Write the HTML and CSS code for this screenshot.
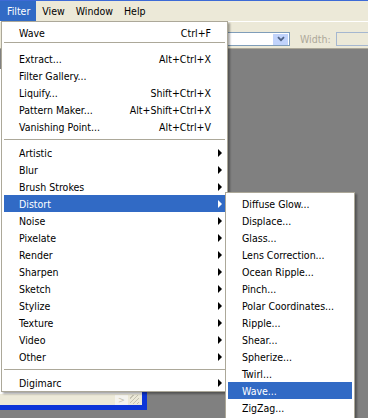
FILE: index.html
```html
<!DOCTYPE html>
<html>
	<head>
		<meta charset="utf-8" />
		<title>Filter Menu</title>
		<link rel="stylesheet" href="styles.css">
	</head>
	<body>
		<div class="menubar">
			<span class="menubar-item active">Filter</span>
			<span class="menubar-item">View</span>
			<span class="menubar-item">Window</span>
			<span class="menubar-item">Help</span>
		</div>

		<div class="options">
			<div class="combo">
				<span class="combo-btn">
					<svg width="8" height="6" viewBox="0 0 8 6"><path d="M1 1.2 L4 4.2 L7 1.2" fill="none" stroke="#4d6185" stroke-width="1.8"/></svg>
				</span>
			</div>
			<span class="options-label">Width:</span>
			<div class="field"></div>
		</div>

		<div class="workspace">
			<div class="doc-window">
				<div class="doc-status">
					<span class="doc-scroll">&gt;</span>
					<span class="doc-grip"></span>
				</div>
			</div>
		</div>

		<!-- Filter menu -->
		<div class="menu filter-menu">
			<div class="item"><span class="label">Wave</span><span class="key">Ctrl+F</span><span class="sub"></span></div>
			<div class="sep first"></div>
			<div class="item"><span class="label">Extract...</span><span class="key">Alt+Ctrl+X</span><span class="sub"></span></div>
			<div class="item"><span class="label">Filter Gallery...</span><span class="sub"></span></div>
			<div class="item"><span class="label">Liquify...</span><span class="key">Shift+Ctrl+X</span><span class="sub"></span></div>
			<div class="item"><span class="label">Pattern Maker...</span><span class="key">Alt+Shift+Ctrl+X</span><span class="sub"></span></div>
			<div class="item"><span class="label">Vanishing Point...</span><span class="key">Alt+Ctrl+V</span><span class="sub"></span></div>
			<div class="sep"></div>
			<div class="item"><span class="label">Artistic</span><span class="sub"><i class="arrow"></i></span></div>
			<div class="item"><span class="label">Blur</span><span class="sub"><i class="arrow"></i></span></div>
			<div class="item"><span class="label">Brush Strokes</span><span class="sub"><i class="arrow"></i></span></div>
			<div class="item selected"><span class="label">Distort</span><span class="sub"><i class="arrow"></i></span></div>
			<div class="item"><span class="label">Noise</span><span class="sub"><i class="arrow"></i></span></div>
			<div class="item"><span class="label">Pixelate</span><span class="sub"><i class="arrow"></i></span></div>
			<div class="item"><span class="label">Render</span><span class="sub"><i class="arrow"></i></span></div>
			<div class="item"><span class="label">Sharpen</span><span class="sub"><i class="arrow"></i></span></div>
			<div class="item"><span class="label">Sketch</span><span class="sub"><i class="arrow"></i></span></div>
			<div class="item"><span class="label">Stylize</span><span class="sub"><i class="arrow"></i></span></div>
			<div class="item"><span class="label">Texture</span><span class="sub"><i class="arrow"></i></span></div>
			<div class="item"><span class="label">Video</span><span class="sub"><i class="arrow"></i></span></div>
			<div class="item"><span class="label">Other</span><span class="sub"><i class="arrow"></i></span></div>
			<div class="sep"></div>
			<div class="item"><span class="label">Digimarc</span><span class="sub"><i class="arrow"></i></span></div>
		</div>

		<!-- Distort submenu -->
		<div class="menu distort-menu">
			<div class="item">Diffuse Glow...</div>
			<div class="item">Displace...</div>
			<div class="item">Glass...</div>
			<div class="item">Lens Correction...</div>
			<div class="item">Ocean Ripple...</div>
			<div class="item">Pinch...</div>
			<div class="item">Polar Coordinates...</div>
			<div class="item">Ripple...</div>
			<div class="item">Shear...</div>
			<div class="item">Spherize...</div>
			<div class="item">Twirl...</div>
			<div class="item selected">Wave...</div>
			<div class="item">ZigZag...</div>
		</div>
	</body>
</html>
```

FILE: styles.css
```css
body {
	margin: 0;
	width: 368px;
	height: 418px;
	overflow: hidden;
	position: relative;
	display: flex;
	flex-direction: column;
	background-color: #808080;
	font-family: "DejaVu Sans Condensed", "Liberation Sans", sans-serif;
	font-stretch: condensed;
	font-size: 10.5px;
	color: #000;
}

/* Top menu bar */
.menubar {
	height: 20px;
	display: flex;
	align-items: stretch;
	background-color: #ece9d8;
	border-top: 1px solid #3d6ad6;
}

.menubar-item {
	display: flex;
	align-items: center;
	padding: 0 5px 0 6px;
}

.menubar-item.active {
	padding: 0 6px 0 7px;
	background-color: #316ac5;
	color: #fff;
}

/* Options bar */
.options {
	height: 16px;
	padding: 10px 0 0 150px;
	display: flex;
	align-items: flex-start;
	background-color: #ece9d8;
	border-top: 1px solid #fff;
	border-bottom: 1px solid #aca899;
}

.combo {
	flex-shrink: 0;
	width: 137px;
	height: 12px;
	border: 1px solid #7f9db9;
	background-color: #fff;
	display: flex;
	justify-content: flex-end;
	align-items: center;
	padding-right: 1px;
}

.combo-btn {
	width: 15px;
	height: 11px;
	background-color: #c1d3fb;
	display: flex;
	align-items: center;
	justify-content: center;
}

.options-label {
	flex-shrink: 0;
	margin-left: 10px;
	margin-top: 1px;
	color: #aca899;
}

/* runs on past the window edge, so no right border */
.field {
	flex: 1;
	margin-left: 5px;
	height: 12px;
	border: 1px solid #a5b7d0;
	border-right: none;
}

/* Workspace and document window */
.workspace {
	flex: 1;
	position: relative;
}

.doc-window {
	position: absolute;
	left: -10px;
	top: 20px;
	width: 147px;
	height: 336px;
	background-color: #fff;
	border: 5px solid #0c35d8;
	border-top: none;
	display: flex;
	flex-direction: column;
	justify-content: flex-end;
}

.doc-status {
	height: 11px;
	background-color: #ece9d8;
	display: flex;
	justify-content: flex-end;
	align-items: center;
	gap: 2px;
	padding-right: 3px;
}

.doc-scroll {
	width: 13px;
	height: 10px;
	background-color: #f4f3ee;
	color: #c5c2b2;
	font-size: 9px;
	line-height: 10px;
	text-align: center;
}

.doc-grip {
	width: 9px;
	height: 9px;
	background: repeating-linear-gradient(135deg, #ece9d8 0 2px, #c5c2b2 2px 3px);
}

/* Menus */
.menu {
	position: absolute;
	background-color: #fff;
	border: 1px solid #aca899;
	box-shadow: 2px 2px 2px rgba(0, 0, 0, 0.35);
}

.filter-menu {
	left: 1px;
	top: 21px;
	width: 221px;
	padding: 2px 2px 0 2px;
}

.distort-menu {
	left: 225px;
	top: 192px;
	width: 124px;
	padding: 2px;
	z-index: 2;
}

.item {
	height: 17px;
	display: flex;
	align-items: center;
	padding-left: 15px;
	white-space: nowrap;
}

.distort-menu .item {
	padding-left: 14px;
}

.item.selected {
	background-color: #316ac5;
	color: #fff;
}

.label {
	flex: 1;
}

.sub {
	width: 14px;
	height: 17px;
	display: flex;
	align-items: center;
}

.arrow {
	margin-left: 7px;
	width: 0;
	height: 0;
	border-left: 4px solid #000;
	border-top: 4px solid transparent;
	border-bottom: 4px solid transparent;
}

.selected .arrow {
	border-left-color: #fff;
}

.sep {
	height: 1px;
	margin: 4px 0;
	background-color: #aca899;
}

.sep.first {
	margin: 1px 0 7px;
}
```
